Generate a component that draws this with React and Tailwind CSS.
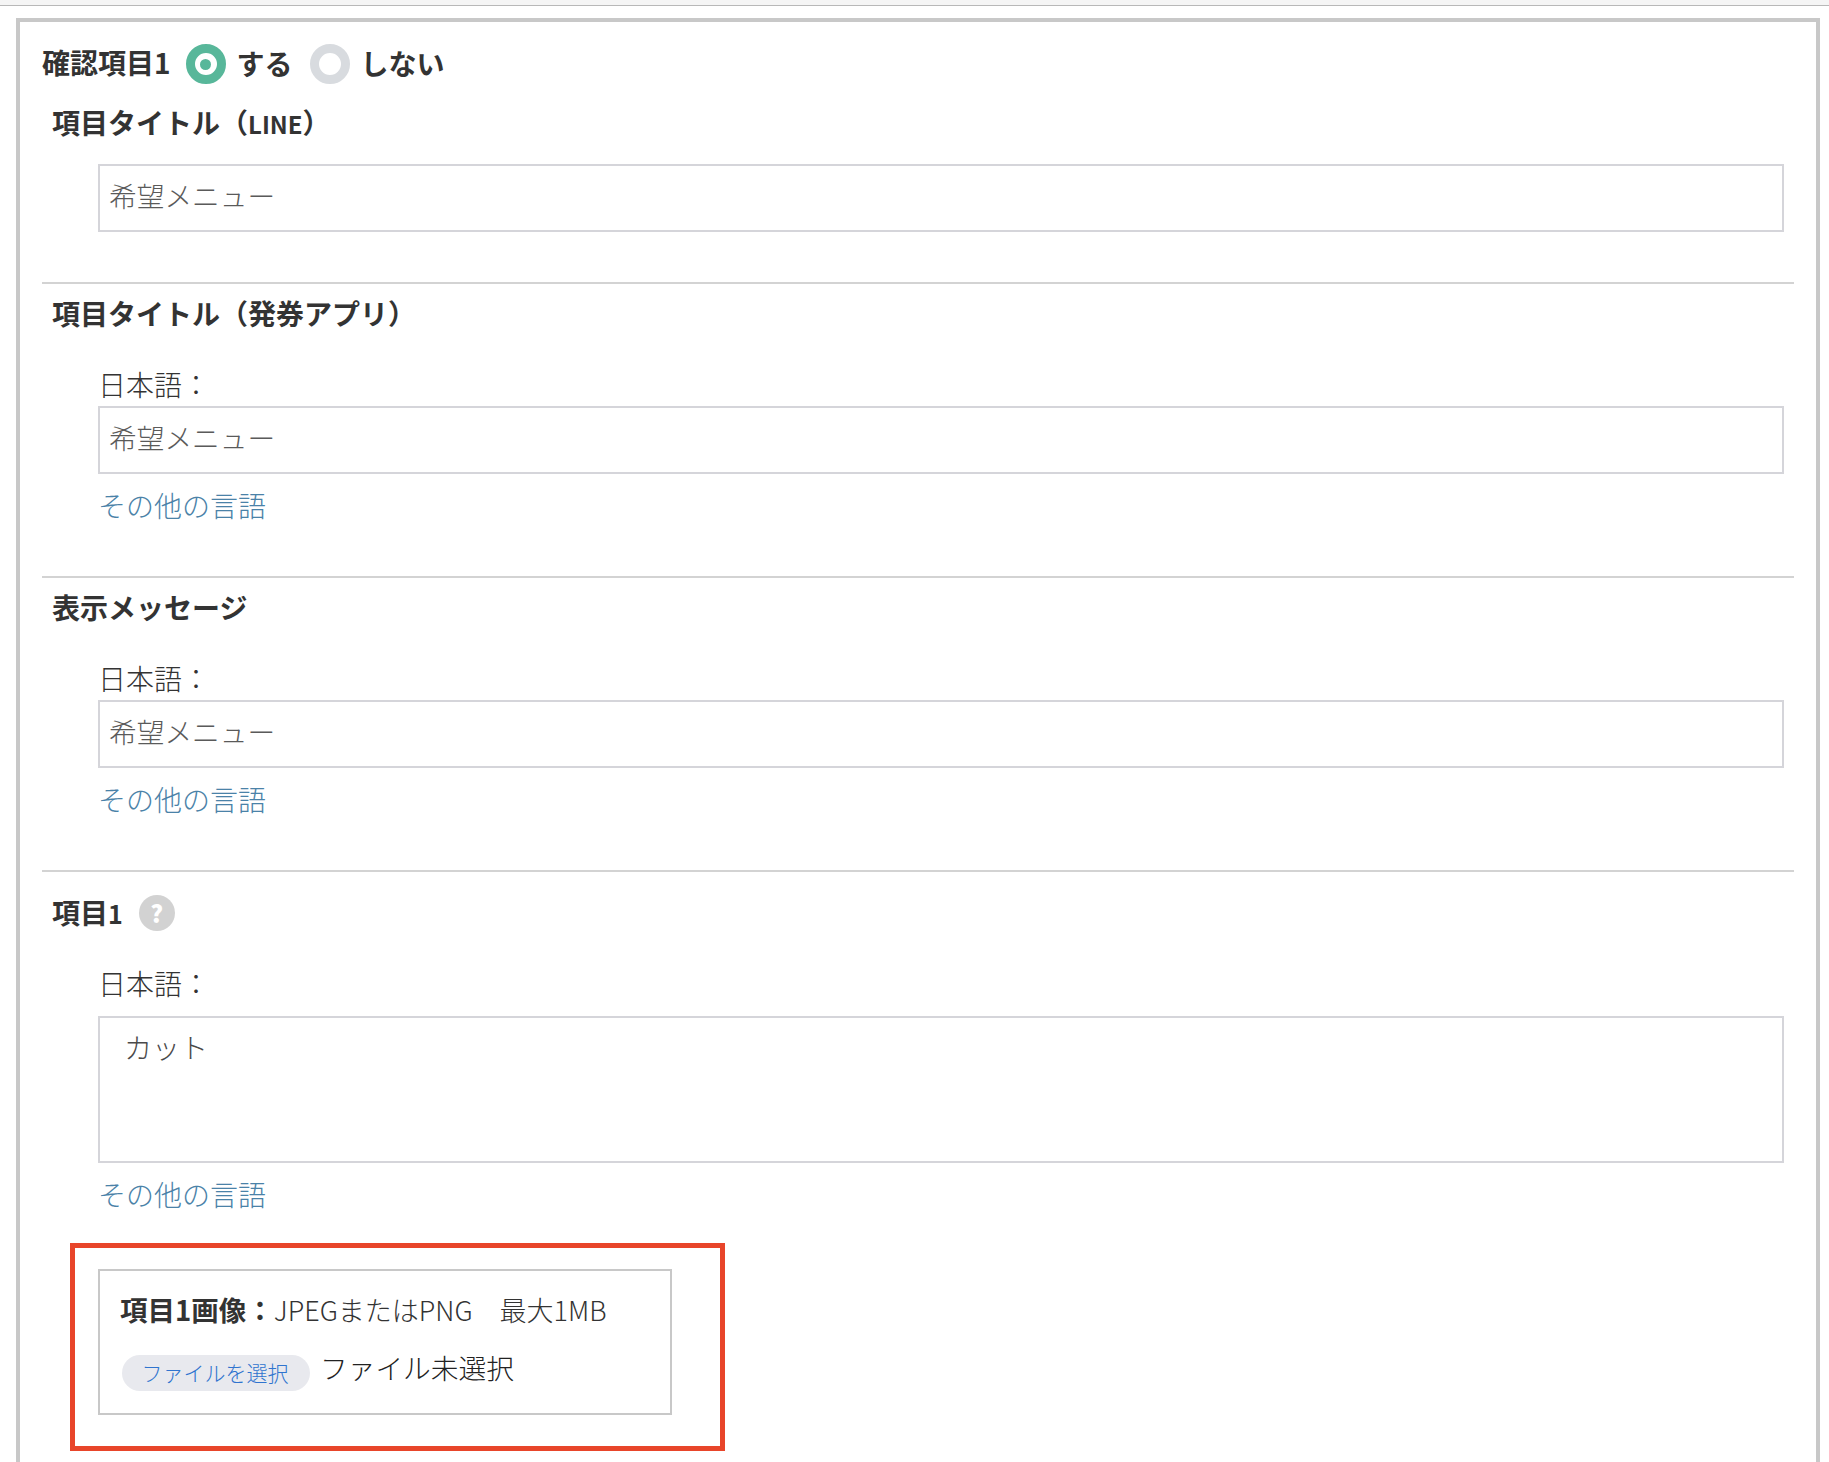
const jpFont = "font-['Noto_Sans_CJK_JP','Noto_Sans',sans-serif]";

function Heading({ children }) {
  return <h3 className="pl-[10px] text-[28px] leading-[36px] font-bold text-[#333]">{children}</h3>;
}

function Radio({ checked, label }) {
  return (
    <label className="flex items-center gap-[11px]">
      <span
        className={
          checked
            ? "flex h-[40px] w-[40px] items-center justify-center rounded-full border-[9px] border-[#58b79a] bg-white"
            : "flex h-[40px] w-[40px] items-center justify-center rounded-full border-[9px] border-[#d8dbdf] bg-white"
        }
      >
        {checked && <span className="h-[11px] w-[11px] rounded-full bg-[#58b79a]" />}
      </span>
      <span className="-translate-y-[1px] text-[28px] leading-[36px] font-bold text-[#333]">{label}</span>
    </label>
  );
}

function TextInput({ value }) {
  return (
    <div className="flex h-[68px] w-[1686px] items-center border-2 border-[#d5d5da] pb-[4px] pl-[9px] text-[27.7px] font-light text-[#5a5a5a]">
      {value}
    </div>
  );
}

function LangBlock({ value }) {
  return (
    <div className="mt-[36px] pl-[56px]">
      <p className="h-[39px] text-[28px] leading-[34px] font-light text-[#333]">日本語：</p>
      <TextInput value={value} />
      <a className="mt-[13px] block text-[28px] leading-[36px] font-light text-[#4a82a8]">その他の言語</a>
    </div>
  );
}

function Divider({ className }) {
  return <hr className={"w-[1752px] border-0 border-t-2 border-[#d3d3d3] " + className} />;
}

export default function App() {
  return (
    <div className={"h-[1462px] overflow-hidden bg-white " + jpFont}>
      <div className="h-[6px] border-b border-[#b8b8b8] bg-[#f5f5f5]" />

      <div className="mx-[16px] mt-[12px] h-[1500px] w-[1804px] border-4 border-[#c8c8c8] pt-[22px] pl-[22px]">
        <div className="flex h-[40px] items-center">
          <span className="mr-[15px] -translate-y-[2px] text-[28px] font-bold text-[#333]">確認項目1</span>
          <Radio checked label="する" />
          <div className="w-[17px]" />
          <Radio label="しない" />
        </div>

        <div className="mt-[20px]">
          <Heading>
            項目タイトル（<span className="text-[24px]">LINE</span>）
          </Heading>
        </div>
        <div className="mt-[22px] pl-[56px]">
          <TextInput value="希望メニュー" />
        </div>

        <Divider className="mt-[50px]" />
        <div className="mt-[11px]">
          <Heading>項目タイトル（発券アプリ）</Heading>
        </div>
        <LangBlock value="希望メニュー" />

        <Divider className="mt-[53px]" />
        <div className="mt-[11px]">
          <Heading>表示メッセージ</Heading>
        </div>
        <LangBlock value="希望メニュー" />

        <Divider className="mt-[53px]" />
        <div className="mt-[22px] flex items-center">
          <Heading>
            項目<span className="text-[25px]">1</span>
          </Heading>
          <span className="ml-[16px] flex h-[36px] w-[36px] items-center justify-center rounded-full bg-[#d2d2d2] text-[24px] font-black text-white">
            ?
          </span>
        </div>

        <div className="mt-[34px] pl-[56px]">
          <p className="h-[51px] text-[28px] leading-[36px] font-light text-[#333]">日本語：</p>
          <div className="h-[147px] w-[1686px] border-2 border-[#d5d5da] pt-[11px] pl-[24px] text-[28px] leading-[36px] font-light text-[#4a4a4a]">
            カット
          </div>
          <a className="mt-[13px] block text-[28px] leading-[36px] font-light text-[#4a82a8]">その他の言語</a>
        </div>

        <div className="mt-[31px] ml-[28px] h-[208px] w-[655px] border-[5px] border-[#e8452a] pt-[21px] pl-[23px]">
          <div className="h-[146px] w-[574px] border-2 border-[#c8c8c8] pt-[20px] pl-[20px]">
            <p className="text-[28px] leading-[36px] text-[#333]">
              <span className="text-[27.5px] font-bold">項目1画像：</span>
              <span className="text-[27px] font-light">JPEGまたはPNG　最大1MB</span>
            </p>
            <div className="mt-[24px] flex items-center pl-[2px]">
              <button className="flex h-[36px] w-[188px] items-center justify-center rounded-[18px] bg-[#e8e9ee] pr-[2px] text-[21px] font-light text-[#2f74cf]">
                ファイルを選択
              </button>
              <span className="ml-[10px] -translate-y-[5px] text-[27.7px] font-light text-[#222]">ファイル未選択</span>
            </div>
          </div>
        </div>
      </div>
    </div>
  );
}
